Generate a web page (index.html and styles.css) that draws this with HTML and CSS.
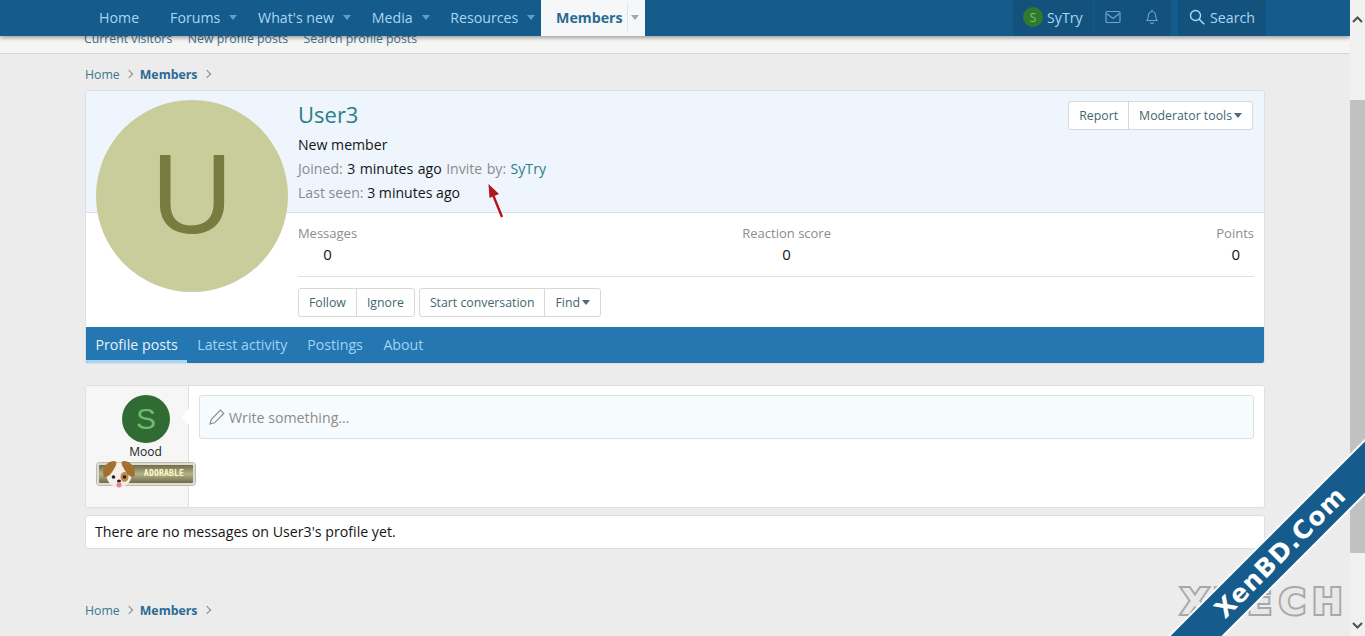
FILE: index.html
```html
<!DOCTYPE html>
<html lang="en">
<head>
<meta charset="utf-8">
<title>User3</title>
<link rel="stylesheet" href="styles.css">
</head>
<body>
<div class="page">
  <header class="nav">
    <nav class="nav-left">
      <a class="nav-item nav-home">Home</a>
      <a class="nav-item">Forums<i class="caret"></i></a>
      <a class="nav-item">What's new<i class="caret"></i></a>
      <a class="nav-item">Media<i class="caret"></i></a>
      <a class="nav-item">Resources<i class="caret"></i></a>
      <a class="nav-active"><b>Members</b><span class="nav-split"><i class="caret caret-grey"></i></span></a>
    </nav>
    <div class="nav-right">
      <a class="nav-box nav-user"><span class="mini-avatar">S</span>SyTry</a>
      <a class="nav-box nav-icons">
        <svg class="ico" viewBox="0 0 16 14" width="16" height="14"><rect x="1" y="1.500" width="14" height="11" rx="1.200" fill="none" stroke="currentColor" stroke-width="1.200"/><path d="M1.500 3.500 8 8.500l6.500-5" fill="none" stroke="currentColor" stroke-width="1.200"/></svg>
        <svg class="ico" viewBox="0 0 14 16" width="14" height="16"><path d="M2 11.500c1-1 1.300-2 1.300-4.500 0-2.500 1.700-4.500 3.700-4.500s3.700 2 3.700 4.500c0 2.500.3 3.500 1.300 4.500zM7 .8v1.700M5.500 13a1.500 1.500 0 0 0 3 0" fill="none" stroke="currentColor" stroke-width="1.100"/></svg>
      </a>
      <a class="nav-box nav-search">
        <svg class="ico" viewBox="0 0 16 16" width="16" height="16"><circle cx="6.500" cy="6.500" r="5" fill="none" stroke="currentColor" stroke-width="1.400"/><path d="m10.200 10.200 5 5" stroke="currentColor" stroke-width="1.600"/></svg>
        Search
      </a>
    </div>
  </header>

  <div class="subnav"><span>Current visitors</span><span>New profile posts</span><span>Search profile posts</span></div>

  <main class="content">
    <div class="crumbs"><a>Home</a><i class="chev"></i><a class="crumb-strong">Members</a><i class="chev"></i></div>

    <section class="profile">
      <div class="big-avatar">U</div>
      <div class="profile-head">
        <div class="head-text">
          <h1 class="name">User3</h1>
          <div class="line title-line">New member</div>
          <div class="line line-join"><span class="muted">Joined:</span> 3 minutes ago <span class="muted">Invite by:</span> <a class="link">SyTry</a></div>
          <div class="line"><span class="muted">Last seen:</span> 3 minutes ago</div>
        </div>
        <div class="btn-group head-btns"><a class="btn">Report</a><a class="btn">Moderator tools<i class="caret-small"></i></a></div>
        <svg class="arrow" viewBox="0 0 20 36" width="20" height="36"><path d="M16 34 7.500 13" stroke="#b3151b" stroke-width="2.400"/><path d="M2.500 1 13 11l-9.500 4z" fill="#b3151b"/></svg>
      </div>
      <div class="profile-body">
        <div class="stats">
          <div class="stat stat-left"><span class="muted">Messages</span><strong>0</strong></div>
          <div class="stat stat-mid"><span class="muted">Reaction score</span><strong>0</strong></div>
          <div class="stat stat-right"><span class="muted">Points</span><strong>0</strong></div>
        </div>
        <div class="actions">
          <div class="btn-group"><a class="btn">Follow</a><a class="btn">Ignore</a></div>
          <div class="btn-group"><a class="btn">Start conversation</a><a class="btn">Find<i class="caret-small"></i></a></div>
        </div>
      </div>
      <div class="tabs">
        <a class="tab tab-active">Profile posts</a>
        <a class="tab">Latest activity</a>
        <a class="tab">Postings</a>
        <a class="tab">About</a>
      </div>
    </section>

    <section class="composer">
      <aside class="composer-side">
        <div class="side-col">
          <div class="mid-avatar">S</div>
          <div class="mood">Mood</div>
          <div class="badge">
            <svg class="dog" viewBox="0 0 36 28" width="36" height="28">
              <circle cx="18" cy="15" r="12.500" fill="#f4eee6"/>
              <ellipse cx="23.500" cy="17" rx="4" ry="5" fill="#c08a4c"/>
              <path d="M3 17C0 10 5 1 13 1c3 0 3 3 1 6-2 4-6 11-11 10z" fill="#a5702f"/>
              <path d="M33 17c3-7-2-16-10-16-3 0-3 3-1 6 2 4 6 11 11 10z" fill="#a5702f"/>
              <circle cx="12.500" cy="17" r="1.800" fill="#222"/><circle cx="23.500" cy="17" r="1.800" fill="#222"/>
              <ellipse cx="18" cy="21" rx="2" ry="1.500" fill="#222"/>
              <rect x="15.500" y="22.500" width="5" height="5" rx="2" fill="#e8829a"/>
            </svg>
            <span class="badge-text">ADORABLE</span>
          </div>
        </div>
        <i class="side-arrow"></i>
      </aside>
      <div class="composer-main">
        <div class="write">
          <svg class="pencil" viewBox="0 0 16 16" width="16" height="16"><path d="M11.500 1.200 14.800 4.500 5.500 13.800 1 15l1.200-4.500z" fill="none" stroke="currentColor" stroke-width="1.200"/></svg>
          Write something...
        </div>
      </div>
    </section>

    <section class="empty">There are no messages on User3's profile yet.</section>

    <div class="crumbs crumbs-bottom"><a>Home</a><i class="chev"></i><a class="crumb-strong">Members</a><i class="chev"></i></div>
  </main>
</div>

<div class="scrollbar">
  <svg class="sb-arrow sb-up" viewBox="0 0 11 7" width="11" height="7"><path d="M1 6 5.500 1.500 10 6" fill="none" stroke="#505050" stroke-width="2"/></svg>
  <div class="sb-thumb"></div>
  <svg class="sb-arrow sb-down" viewBox="0 0 11 7" width="11" height="7"><path d="M1 1 5.500 5.500 10 1" fill="none" stroke="#505050" stroke-width="2"/></svg>
</div>

<div class="watermark">
  <span class="wm-tech">XTECH</span>
  <div class="wm-ribbon"><span>XenBD.Com</span></div>
</div>
</body>
</html>
```

FILE: styles.css
```css
* { box-sizing: border-box; }
html, body { height: 100%; }
body {
  margin: 0;
  display: flex;
  height: 636px;
  overflow: hidden;
  background: #ececec;
  color: #141414;
  font-family: "Open Sans", "Noto Sans", sans-serif;
  font-size: 14px;
  position: relative;
}
a { color: inherit; text-decoration: none; }
i { font-style: normal; }
.page { width: 1350px; flex: none; height: 636px; overflow: hidden; }

/* top navigation */
.nav {
  position: relative;
  z-index: 2;
  height: 36px;
  background: #155b8b;
  box-shadow: 0 2px 4px rgba(0, 0, 0, .35);
  color: #a8d6f5;
  display: flex;
  justify-content: space-between;
  padding: 0 84px 0 85px;
  font-size: 14.200px;
}
.nav-left, .nav-right { display: flex; align-items: stretch; }
.nav-item { display: flex; align-items: center; padding: 0 0 2px 14px; margin-right: 6.700px; white-space: nowrap; }
.nav-home { margin-right: 17px; }
.caret {
  display: block;
  width: 0; height: 0;
  margin-left: 9px;
  border: 4.500px solid transparent;
  border-top: 5px solid #5c9fcb;
  border-bottom: 0;
}
.caret-grey { border-top-color: #a0a8ac; margin: 0; }
.nav-active {
  display: flex;
  align-items: center;
  background: #f5f7f8;
  color: #2b6a94;
  padding: 0 0 2px 15px;
  width: 104px;
  margin-left: -1px;
}
.nav-split { display: flex; align-items: center; border-left: 1px solid #dfe5e9; height: 28px; padding-left: 3px; margin-left: 4px; }
.nav-box { display: flex; align-items: center; background: #14527e; white-space: nowrap; padding-bottom: 2px; }
.nav-user { width: 81px; padding-left: 10px; border-right: 1px solid #175a88; }
.mini-avatar {
  width: 20px; height: 20px; border-radius: 50%;
  background: #2f7a2f; color: #6fc46f;
  display: flex; align-items: center; justify-content: center;
  font-size: 12px; margin-right: 4px;
}
.nav-icons { width: 77px; padding-left: 11px; gap: 24px; color: #6ba6d0; margin-right: 7px; }
.nav-search { width: 88px; padding-left: 11px; gap: 5px; }
.ico { display: block; flex: none; }

/* sub navigation strip, tucked under the bar */
.subnav {
  height: 18px;
  background: #f5f5f4;
  border-bottom: 1px solid #d8d8d8;
  padding-left: 84px;
  font-size: 12.300px;
  line-height: 5px;
  color: #3d7092;
  display: flex;
  gap: 15.500px;
  white-space: nowrap;
}

.content { padding: 0 85px; }
.crumbs { height: 36px; display: flex; align-items: center; gap: 6px; font-size: 12.300px; color: #3a7a8c; padding-top: 4px; }
.crumb-strong { font-weight: 700; color: #2b6a94; }
.chev { width: 6px; height: 6px; border-top: 1px solid #8a8a8a; border-right: 1px solid #8a8a8a; transform: rotate(45deg); margin-right: 2px; }
.crumb-strong + .chev { margin-left: 1px; }
.crumbs-bottom { margin-top: 41px; }

/* profile block */
.profile {
  position: relative;
  background: #fff;
  border: 1px solid #dfdfdf;
  border-radius: 3px;
  overflow: hidden;
}
.big-avatar {
  position: absolute;
  z-index: 1;
  left: 10px; top: 9px;
  width: 192px; height: 192px;
  border-radius: 50%;
  background: #c9cd9b;
  color: #7a7b3f;
  font: 113px/188px "Liberation Sans", sans-serif;
  text-align: center;
}
.profile-head {
  position: relative;
  height: 122px;
  background: #eef5fc;
  border-bottom: 1px solid #dcdfe2;
  padding: 7px 11px 0 212px;
  display: flex;
  justify-content: space-between;
}
.name { margin: 0; font-size: 22px; font-weight: 400; line-height: 33px; color: #2a8088; }
.line { line-height: 24px; font-size: 14.100px; white-space: nowrap; }
.line-join { word-spacing: .8px; }
.title-line { margin-top: 2px; }
.muted { color: #8c8c8c; }
.link { color: #2a8088; }
.head-btns { margin-top: 3px; align-self: flex-start; }
.arrow { position: absolute; left: 400px; top: 92px; }
.profile-body { padding-left: 212px; padding-right: 10px; height: 114px; }
.stats { height: 64px; border-bottom: 1px solid #e0e0e0; display: flex; justify-content: space-between; padding-top: 10px; font-size: 13px; }
.stat { display: flex; flex-direction: column; align-items: center; line-height: 20px; }
.stat strong { font-weight: 400; font-size: 15px; color: #141414; line-height: 23px; }
.stat-left { width: 59px; }
.stat-right { align-items: flex-end; }
.stat-right strong { padding-right: 14px; }
.actions { display: flex; gap: 4px; padding-top: 11px; }
.btn-group { display: flex; height: 29px; background: #fff; border: 1px solid #d8d8d8; border-radius: 3px; font-size: 12.300px; color: #3f6770; }
.btn { display: flex; align-items: center; padding: 0 10px; white-space: nowrap; }
.btn + .btn { border-left: 1px solid #d8d8d8; }
.caret-small { display: block; width: 0; height: 0; margin-left: 2px; border: 4.500px solid transparent; border-top: 5px solid #53687a; border-bottom: 0; }
.tabs { height: 36px; background: #2577b1; color: #9fd3f7; display: flex; font-size: 14.200px; }
.tab { display: flex; align-items: center; padding: 0 10px 2px; }
.tab-active { color: #e4f2fc; box-shadow: inset 0 -3px 0 #a8d4f5; padding-left: 9.500px; padding-right: 9.500px; }
.tab:last-child { padding-left: 10.500px; }

/* composer */
.composer {
  margin-top: 21px;
  height: 123px;
  display: flex;
  background: #fff;
  border: 1px solid #dfdfdf;
  border-radius: 3px;
}
.composer-side { width: 103px; flex: none; background: #f6f6f6; border-right: 1px solid #dfdfdf; position: relative; }
.side-col { position: relative; z-index: 1; width: 98px; margin-left: 11px; padding-top: 9px; display: flex; flex-direction: column; align-items: center; }
.side-arrow { position: absolute; right: -1px; top: 23px; width: 0; height: 0; border: 8px solid transparent; border-right: 8px solid #fff; border-left: 0; }
.mid-avatar { width: 48px; height: 48px; border-radius: 50%; background: #2f6b32; color: #6dbd6d; font: 30px/48px "Liberation Sans", sans-serif; text-align: center; }
.mood { font-size: 12px; line-height: 18px; color: #222; margin-left: -1px; }
.badge {
  position: relative;
  width: 98px; height: 22px; margin-top: 2px;
  background: linear-gradient(#6e6c4a, #b4b288 50%, #6e6c4a);
  border: 2px solid #dcdcd0;
  box-shadow: 0 0 0 1px #bbbbae;
  border-radius: 3px;
  display: flex; align-items: center; justify-content: flex-end;
  padding-right: 9px;
}
.dog { position: absolute; left: 2px; top: -5px; }
.badge-text { font: 700 8px/1 "DejaVu Sans Mono", monospace; letter-spacing: .2px; color: #fdf8c8; }
.composer-main { flex: 1; padding: 9px 10px; }
.write { height: 44px; border: 1px solid #dcdfe2; border-radius: 3px; background: #f6fbfe; color: #8c8c8c; font-size: 14.200px; display: flex; align-items: center; gap: 4px; padding-left: 9px; }
.pencil { color: #8c8c8c; }

.empty { margin-top: 7px; height: 34px; background: #fff; border: 1px solid #dfdfdf; border-radius: 3px; display: flex; align-items: center; padding: 0 0 1px 9px; font-size: 14.200px; }

/* window scrollbar */
.scrollbar { width: 15px; flex: none; height: 636px; background: #f1f1f1; display: flex; flex-direction: column; align-items: center; }
.sb-arrow { display: block; flex: none; }
.sb-up { margin-top: 16px; }
.sb-thumb { width: 15px; height: 453px; margin-top: 77px; background: #c1c1c1; flex: none; }
.sb-down { margin-top: 69px; }

/* corner watermark */
.watermark { position: absolute; right: 0; bottom: 0; width: 200px; height: 200px; overflow: hidden; pointer-events: none; }
.wm-tech { position: absolute; left: 16px; bottom: 21px; font: 700 36px/27px "DejaVu Sans", sans-serif; letter-spacing: 7px; color: #e8e8e8; -webkit-text-stroke: 4px #a8a8a8; paint-order: stroke fill; white-space: nowrap; }
.wm-ribbon {
  position: absolute;
  left: -45px; top: 98px;
  width: 320px; height: 36px;
  background: #155b8b;
  box-shadow: 0 0 0 2px #fff;
  transform: rotate(-45deg);
  display: flex; align-items: center; justify-content: center;
  color: #fff;
  font: 700 25px/1 "DejaVu Sans", sans-serif;
  letter-spacing: 1px;
  white-space: nowrap;
}
```
